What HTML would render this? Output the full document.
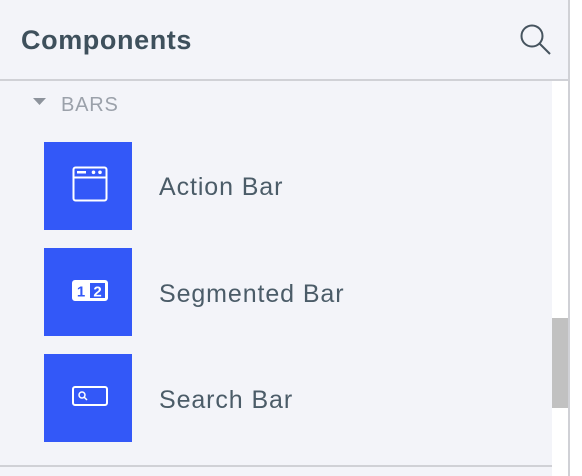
<!DOCTYPE html>
<html><head><style>
body{margin:0;width:582px;height:476px;background:#fff;position:relative;overflow:hidden;font-family:"Liberation Sans",sans-serif}
.bg{position:absolute;left:0;top:0;width:568px;height:476px;background:#f3f4f9}
.rb{position:absolute;left:568px;top:0;width:2px;height:476px;background:#d0d1d6}
.hl{position:absolute;left:0;top:79px;width:568px;height:2px;background:#d0d1d6}
.sb{position:absolute;left:552px;top:81px;width:16px;height:395px;background:#fff}
.th{position:absolute;left:552px;top:318px;width:16px;height:90px;background:#c1c1c1}
.bl{position:absolute;left:0;top:465px;width:552px;height:2px;background:#d0d1d6}
.title{position:absolute;left:21px;top:25px;font-size:27px;font-weight:bold;color:#3e505c;letter-spacing:0.6px}
.bars{position:absolute;left:61px;top:94px;font-size:20px;color:#9ba1aa;letter-spacing:0.8px}
.tile{position:absolute;left:44px;width:88px;height:88px;background:#3358f8}
.lab{position:absolute;left:159px;font-size:25px;color:#4b5c68;letter-spacing:0.9px}
svg{position:absolute}
</style></head><body>
<div class="bg"></div><div class="rb"></div><div class="hl"></div><div class="sb"></div><div class="th"></div><div class="bl"></div>
<div class="title">Components</div>
<svg style="left:518px;top:22px" width="36" height="36" viewBox="0 0 36 36"><circle cx="14" cy="14" r="10.5" fill="none" stroke="#46545f" stroke-width="2"/><line x1="21.5" y1="21.5" x2="32" y2="32" stroke="#46545f" stroke-width="2"/></svg>
<svg style="left:33px;top:98px" width="14" height="8"><polygon points="0,0 13,0 6.5,7" fill="#8d939c"/></svg>
<div class="bars">BARS</div>
<div class="tile" style="top:142px"></div>
<div class="tile" style="top:248px"></div>
<div class="tile" style="top:354px"></div>
<svg style="left:72px;top:166px" width="36" height="36" viewBox="0 0 36 36"><rect x="1.5" y="1.5" width="33" height="33" rx="2" fill="none" stroke="#fff" stroke-width="2"/><line x1="1.5" y1="11.5" x2="34.5" y2="11.5" stroke="#fff" stroke-width="2"/><rect x="5" y="5" width="9" height="2.5" fill="#fff"/><circle cx="21.5" cy="6.3" r="1.8" fill="#fff"/><circle cx="28" cy="6.3" r="1.8" fill="#fff"/></svg>
<svg style="left:72px;top:280px" width="36" height="21" viewBox="0 0 36 21"><rect x="1" y="1" width="34" height="19" rx="2" fill="#fff" stroke="#fff" stroke-width="2"/><rect x="18" y="3" width="15" height="15" fill="#3358f8"/><text x="9" y="16.5" font-family="Liberation Sans" font-weight="bold" font-size="15" fill="#3358f8" text-anchor="middle">1</text><text x="25.5" y="16.5" font-family="Liberation Sans" font-weight="bold" font-size="15" fill="#fff" text-anchor="middle">2</text></svg>
<svg style="left:72px;top:386px" width="36" height="20" viewBox="0 0 36 20"><rect x="1" y="1" width="34" height="18" rx="2" fill="none" stroke="#fff" stroke-width="2"/><circle cx="10" cy="9" r="3" fill="none" stroke="#fff" stroke-width="1.5"/><line x1="12" y1="11" x2="15" y2="14" stroke="#fff" stroke-width="1.5"/></svg>
<div class="lab" style="top:173px">Action Bar</div>
<div class="lab" style="top:280px">Segmented Bar</div>
<div class="lab" style="top:386px">Search Bar</div>
</body></html>
